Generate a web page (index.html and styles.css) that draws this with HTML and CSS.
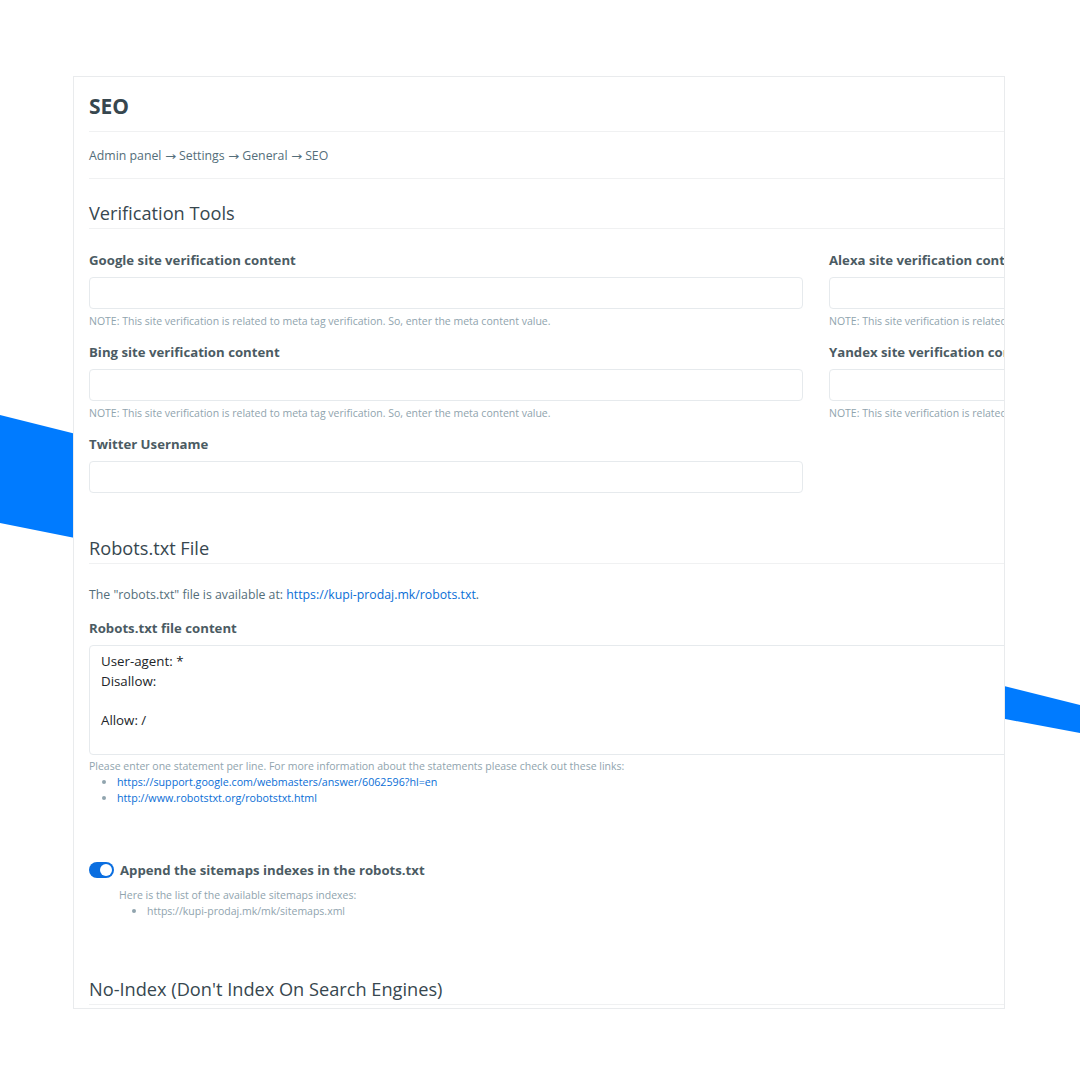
FILE: index.html
```html
<!DOCTYPE html>
<html>
<head>
<meta charset="utf-8">
<link rel="stylesheet" href="styles.css">
</head>
<body>
<svg class="bg" width="1080" height="1080" viewBox="0 0 1080 1080">
  <polygon points="0,415 80,435 80,539 0,523" fill="#007bff"/>
  <polygon points="1000,685 1080,705 1080,733 1000,718" fill="#007bff"/>
</svg>
<div class="panel">
  <div class="content">
    <div class="title-bar"><h1 class="title">SEO</h1></div>
    <div class="crumbs">Admin panel <span class="arrow">→</span> Settings <span class="arrow">→</span> General <span class="arrow">→</span> SEO</div>

    <h2 class="section-title first">Verification Tools</h2>
    <div class="grid">
      <div class="group">
        <div class="label">Google site verification content</div>
        <div class="input"></div>
        <div class="note">NOTE: This site verification is related to meta tag verification. So, enter the meta content value.</div>
      </div>
      <div class="group">
        <div class="label">Alexa site verification content</div>
        <div class="input"></div>
        <div class="note">NOTE: This site verification is related to meta tag verification. So, enter the meta content value.</div>
      </div>
      <div class="group">
        <div class="label">Bing site verification content</div>
        <div class="input"></div>
        <div class="note">NOTE: This site verification is related to meta tag verification. So, enter the meta content value.</div>
      </div>
      <div class="group">
        <div class="label">Yandex site verification content</div>
        <div class="input"></div>
        <div class="note">NOTE: This site verification is related to meta tag verification. So, enter the meta content value.</div>
      </div>
      <div class="group">
        <div class="label">Twitter Username</div>
        <div class="input"></div>
      </div>
    </div>

    <h2 class="section-title robots">Robots.txt File</h2>
    <p class="info">The "robots.txt" file is available at: <a class="link">https://kupi-prodaj.mk/robots.txt</a>.</p>
    <div class="label">Robots.txt file content</div>
    <div class="textarea">
      <div class="line">User-agent: *</div>
      <div class="line">Disallow:</div>
      <div class="line">&nbsp;</div>
      <div class="line">Allow: /</div>
    </div>
    <div class="note help">Please enter one statement per line. For more information about the statements please check out these links:</div>
    <ul class="links">
      <li><a class="link">https://support.google.com/webmasters/answer/6062596?hl=en</a></li>
      <li><a class="link">http://www.robotstxt.org/robotstxt.html</a></li>
    </ul>

    <div class="toggle-row">
      <span class="toggle"><span class="knob"></span></span>
      <span class="toggle-label">Append the sitemaps indexes in the robots.txt</span>
    </div>
    <div class="sub">
      <div class="note">Here is the list of the available sitemaps indexes:</div>
      <ul class="sub-list">
        <li>https://kupi-prodaj.mk/mk/sitemaps.xml</li>
      </ul>
    </div>

    <h2 class="section-title noindex">No-Index (Don't Index On Search Engines)</h2>
  </div>
</div>
</body>
</html>
```
FILE: styles.css
```css
html, body {
  margin: 0;
  padding: 0;
}
body {
  width: 1080px;
  height: 1080px;
  background: #ffffff;
  position: relative;
  overflow: hidden;
  font-family: "Open Sans", "Noto Sans", sans-serif;
}
.bg {
  position: absolute;
  left: 0;
  top: 0;
}
.panel {
  position: relative;
  margin-left: 73px;
  margin-top: 76px;
  width: 915px;
  height: 931px;
  border: 1px solid #e9ebed;
  background: #ffffff;
  overflow: hidden;
  padding-left: 15px;
}
.content {
  width: 1480px;
}
.title-bar {
  padding-top: 14px;
  padding-bottom: 10px;
  border-bottom: 1px solid #f0f1f2;
}
.title {
  margin: 0;
  font-size: 21px;
  line-height: 30px;
  font-weight: 700;
  color: #37474f;
}
.crumbs {
  padding-top: 14px;
  padding-bottom: 12px;
  height: 20px;
  font-size: 12.3px;
  line-height: 20px;
  color: #546e7a;
  border-bottom: 1px solid #f0f1f2;
}
.arrow {
  font-family: "DejaVu Sans", sans-serif;
  font-size: 11px;
  line-height: 0;
  display: inline-block;
  transform: scaleX(1.2);
  margin: 0 1px;
}
.section-title {
  margin: 0;
  font-size: 18.2px;
  line-height: 28px;
  font-weight: 400;
  color: #37474f;
  padding-bottom: 1px;
  border-bottom: 1px solid #f0f1f2;
}
.section-title.first {
  margin-top: 20px;
}
.grid {
  display: grid;
  grid-template-columns: 714px 714px;
  column-gap: 26px;
  row-gap: 13px;
  margin-top: 21px;
}
.label {
  font-size: 13.2px;
  line-height: 20px;
  font-weight: 700;
  color: #4b5b63;
}
.input {
  margin-top: 7px;
  height: 30px;
  border: 1px solid #e6eaed;
  border-radius: 4px;
  background: #fff;
}
.note {
  margin-top: 4px;
  font-size: 10.5px;
  line-height: 16px;
  color: #90a4ae;
}
.section-title.robots {
  margin-top: 41px;
}
.info {
  margin: 21px 0 13px 0;
  font-size: 12.3px;
  line-height: 20px;
  color: #546e7a;
}
.link {
  color: #0a6ed6;
  text-decoration: none;
}
.textarea {
  margin-top: 7px;
  border: 1px solid #e6eaed;
  border-radius: 4px;
  padding: 6px 12px 0 11px;
  box-sizing: content-box;
  overflow: hidden;
  font-size: 13.3px;
  line-height: 19.5px;
  color: #212529;
  height: 102px;
}
.help {
  margin-top: 3px;
}
.links {
  margin: 0;
  padding-left: 28px;
  font-size: 10.7px;
  line-height: 16px;
  color: #90a4ae;
}
.links li::marker {
  font-size: 11px;
}
.toggle-row {
  margin-top: 54px;
  display: flex;
  align-items: center;
  gap: 6px;
  height: 20px;
}
.toggle {
  width: 25px;
  height: 16px;
  border-radius: 8px;
  background: #0a6ee0;
  position: relative;
  flex: none;
}
.knob {
  position: absolute;
  right: 2px;
  top: 2px;
  width: 12px;
  height: 12px;
  border-radius: 50%;
  background: #fff;
}
.toggle-label {
  font-size: 13.2px;
  line-height: 20px;
  font-weight: 700;
  color: #4b5b63;
}
.sub {
  margin-left: 30px;
  margin-top: 7px;
}
.sub-list {
  margin: 0;
  padding-left: 28px;
  font-size: 10.5px;
  line-height: 16px;
  color: #90a4ae;
}
.sub-list li::marker {
  font-size: 11px;
}
.section-title.noindex {
  margin-top: 56px;
}
```
